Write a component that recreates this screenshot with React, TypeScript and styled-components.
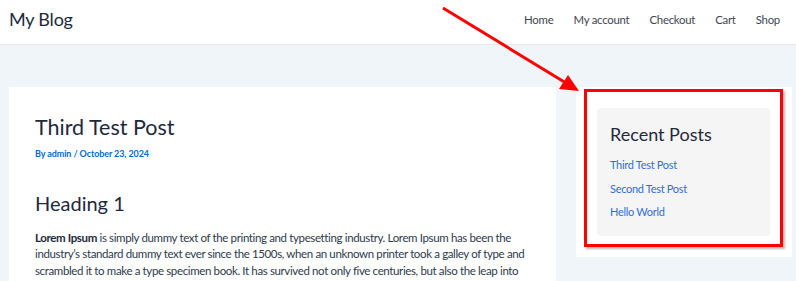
import styled, { createGlobalStyle } from 'styled-components';

const GlobalStyle = createGlobalStyle`
  html, body {
    margin: 0;
    padding: 0;
    background: #f0f5fa;
    font-family: Lato, 'Noto Sans', sans-serif;
    overflow: hidden;
  }
  * {
    box-sizing: border-box;
  }
`;

const navItems = ['Home', 'My account', 'Checkout', 'Cart', 'Shop'];
const recentPosts = ['Third Test Post', 'Second Test Post', 'Hello World'];

const App = () => {
  return (
    <Page>
      <GlobalStyle />
      <Header>
        <SiteTitle>My Blog</SiteTitle>
        <Nav>
          {navItems.map((item) => (
            <NavLink key={item}>{item}</NavLink>
          ))}
        </Nav>
      </Header>
      <Main>
        <Article>
          <PostTitle>Third Test Post</PostTitle>
          <Meta>By admin / October 23, 2024</Meta>
          <Heading>Heading 1</Heading>
          <Paragraph>
            <strong>Lorem Ipsum</strong> is simply dummy text of the printing
            and typesetting industry. Lorem Ipsum has been the industry’s
            standard dummy text ever since the 1500s, when an unknown printer
            took a galley of type and scrambled it to make a type specimen
            book. It has survived not only five centuries, but also the leap
            into electronic typesetting, remaining essentially unchanged.
          </Paragraph>
        </Article>
        <Sidebar>
          <Highlight>
            <Widget>
              <WidgetTitle>Recent Posts</WidgetTitle>
              <PostList>
                {recentPosts.map((post) => (
                  <li key={post}>
                    <PostLink>{post}</PostLink>
                  </li>
                ))}
              </PostList>
            </Widget>
          </Highlight>
        </Sidebar>
      </Main>
      <Arrow width="796" height="281" viewBox="0 0 796 281">
        <line x1="443" y1="8" x2="566" y2="83" stroke="#ff0000" strokeWidth="3" />
        <polygon points="579,91 559,89 568,75" fill="#ff0000" />
      </Arrow>
    </Page>
  );
};

const Page = styled.div`
  position: relative;
  width: 796px;
  height: 281px;
  overflow: hidden;
`;

const Header = styled.header`
  height: 45px;
  background: #ffffff;
  border-bottom: 1px solid #e8ebee;
  display: flex;
  align-items: center;
  justify-content: space-between;
  padding: 0 16px 6px 9px;
`;

const SiteTitle = styled.div`
  font-size: 18px;
  font-weight: 400;
  letter-spacing: -0.2px;
  color: #1e293b;
`;

const Nav = styled.nav`
  display: flex;
  gap: 20px;
`;

const NavLink = styled.a`
  font-size: 11.4px;
  letter-spacing: -0.25px;
  color: #3f4652;
`;

const Main = styled.main`
  display: flex;
  align-items: flex-start;
  gap: 20px;
  padding: 42px 0 0 9px;
`;

const Article = styled.article`
  width: 547px;
  background: #ffffff;
  padding: 25px 22px 40px 26px;
`;

const PostTitle = styled.h1`
  margin: 0;
  font-size: 21.5px;
  font-weight: 400;
  line-height: 30px;
  color: #1e293b;
`;

const Meta = styled.div`
  margin-top: 6px;
  font-size: 9px;
  font-weight: 700;
  letter-spacing: -0.1px;
  color: #046bd2;
`;

const Heading = styled.h2`
  margin: 30px 0 0;
  font-size: 20px;
  font-weight: 400;
  line-height: 28px;
  color: #1e293b;
`;

const Paragraph = styled.p`
  margin: 12.5px 0 0;
  font-size: 11.5px;
  letter-spacing: -0.37px;
  line-height: 16.5px;
  color: #2e3a4c;

  strong {
    color: #1e293b;
  }
`;

const Sidebar = styled.aside`
  width: 216px;
  background: #ffffff;
  padding: 2px 9px 10px 8px;
`;

const Highlight = styled.div`
  border: 3px solid #ff0000;
  box-shadow: 2px 2px 2px rgba(90, 90, 90, 0.45);
  padding: 16px 10px 8px 10px;
  background: #ffffff;
`;

const Widget = styled.section`
  background: #f5f5f5;
  border-radius: 4px;
  padding: 13px 13px 15px;
`;

const WidgetTitle = styled.h2`
  margin: 0;
  font-size: 18px;
  font-weight: 400;
  line-height: 26px;
  color: #1e293b;
`;

const PostList = styled.ul`
  list-style: none;
  margin: 9px 0 0;
  padding: 0;
  display: flex;
  flex-direction: column;
  gap: 5.5px;

  li {
    height: 18px;
  }
`;

const PostLink = styled.a`
  display: block;
  font-size: 11px;
  line-height: 18px;
  letter-spacing: -0.3px;
  color: #2f6fd6;
`;

const Arrow = styled.svg`
  position: absolute;
  left: 0;
  top: 0;
  pointer-events: none;
`;

export default App;
